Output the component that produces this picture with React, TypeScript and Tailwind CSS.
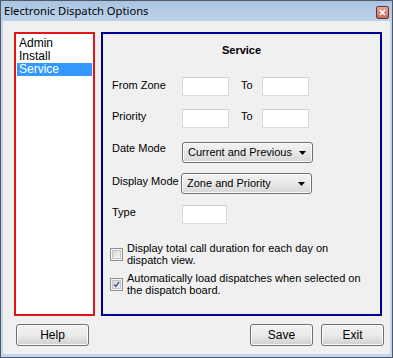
import React, { useState } from 'react';

const font = { fontFamily: '"Liberation Sans", Arial, sans-serif' };

const TextBox: React.FC<{ w: string }> = ({ w }) => (
  <div className={`${w} h-[19px] bg-white border border-[#d9d9d9] border-t-[#cfcfcf]`} />
);

const Dropdown: React.FC<{ value: string }> = ({ value }) => (
  <div className="w-[131px] h-[21px] rounded-[3px] border border-[#707070] bg-gradient-to-b from-[#f3f3f3] via-[#e8e8e8] to-[#d7d7d7] flex items-center pl-[5px] pr-[5px] shadow-[inset_0_0_0_1px_#fcfcfc]">
    <span className="flex-1 text-[11px] leading-[13px] text-black">{value}</span>
    <svg width="7" height="4" viewBox="0 0 7 4" className="mr-[1px]">
      <path d="M0 0h7L3.5 4z" fill="#000" />
    </svg>
  </div>
);

const Check: React.FC<{ checked: boolean; onClick: () => void }> = ({ checked, onClick }) => (
  <div
    onClick={onClick}
    className="w-[13px] h-[13px] shrink-0 border border-[#8e8f8f] bg-[#f4f4f4] flex items-center justify-center"
  >
    <div className="w-[9px] h-[9px] border border-[#c4c4c4] bg-gradient-to-br from-[#d8d8d8] to-[#f6f6f6] flex items-center justify-center">
      {checked && (
        <svg width="9" height="9" viewBox="0 0 9 9">
          <path d="M1.5 4.5 L3.5 7 L7.8 1.3" fill="none" stroke="#3c5a9a" strokeWidth="1.8" />
        </svg>
      )}
    </div>
  </div>
);

const Btn: React.FC<{ label: string; w: string }> = ({ label, w }) => (
  <button className={`${w} h-[22px] rounded-[3px] border border-[#707070] bg-gradient-to-b from-[#f2f2f2] via-[#ebebeb] to-[#cfcfcf] text-[12px] text-black shadow-[inset_0_0_0_1px_#fbfbfb]`}>
    {label}
  </button>
);

const App: React.FC = () => {
  const [selected, setSelected] = useState('Service');
  const [showTotal, setShowTotal] = useState(false);
  const [autoLoad, setAutoLoad] = useState(true);

  return (
    <div style={font} className="w-[393px] h-[358px] border border-[#4e5866] bg-[#c4d6ec] flex flex-col">
      {/* title bar */}
      <div className="h-[20px] bg-gradient-to-b from-[#aac4e1] to-[#bed3ea] flex items-center pl-[3px] pr-[3px]">
        <span style={{ fontFamily: '"Noto Sans", sans-serif' }} className="flex-1 text-[11.2px] leading-[14px] text-black">
          Electronic Dispatch Options
        </span>
        <div className="w-[13px] h-[13px] mt-[2px] rounded-[2px] border border-[#5b3a36] bg-gradient-to-b from-[#e6a79d] to-[#c86a5e] flex items-center justify-center">
          <svg width="7" height="7" viewBox="0 0 7 7">
            <path d="M1 1L6 6M6 1L1 6" stroke="#fff" strokeWidth="1.6" />
          </svg>
        </div>
      </div>

      {/* client area */}
      <div className="flex-1 mx-[2px] mb-[3px] bg-[#f0f0f0] flex flex-col pl-[11px] pr-[6px] pt-[11px]">
        <div className="flex gap-[6px]">
          {/* list */}
          <div className="w-[81px] h-[284px] border-2 border-[#e0161b] bg-white pt-[3px] pl-[1px] pr-[1px] text-[12px] leading-[13px]">
            {['Admin', 'Install', 'Service'].map((it) => (
              <div
                key={it}
                onClick={() => setSelected(it)}
                className={`pl-[2px] h-[13px] ${selected === it ? 'bg-[#3399ff] text-white' : 'text-black'}`}
              >
                {it}
              </div>
            ))}
          </div>

          {/* service panel */}
          <div className="w-[281px] h-[284px] border-2 border-[#000093] flex flex-col text-[11px] leading-[13px] text-black">
            <div className="mt-[10px] text-center font-bold">Service</div>

            <div className="mt-[20px] flex pl-[9px] h-[19px]">
              <span className="w-[70px] pt-[2px]">From Zone</span>
              <TextBox w="w-[47px]" />
              <span className="ml-[12px] w-[21px] pt-[2px]">To</span>
              <TextBox w="w-[47px]" />
            </div>

            <div className="mt-[13px] flex pl-[9px] h-[19px]">
              <span className="w-[70px] pt-[1px]">Priority</span>
              <TextBox w="w-[47px]" />
              <span className="ml-[12px] w-[21px] pt-[1px]">To</span>
              <TextBox w="w-[47px]" />
            </div>

            <div className="mt-[14px] flex pl-[9px]">
              <span className="w-[70px] pt-[0px]">Date Mode</span>
              <Dropdown value="Current and Previous" />
            </div>

            <div className="mt-[10px] flex pl-[9px]">
              <span className="w-[69px] pt-[2px] whitespace-nowrap">Display Mode</span>
              <Dropdown value="Zone and Priority" />
            </div>

            <div className="mt-[11px] flex pl-[9px] h-[19px]">
              <span className="w-[70px] pt-[1px]">Type</span>
              <TextBox w="w-[45px]" />
            </div>

            <div className="mt-[18px] flex items-center pl-[7px] gap-[4px] leading-[12px]">
              <Check checked={showTotal} onClick={() => setShowTotal(!showTotal)} />
              <span>
                Display total call duration for each day on
                <br />
                dispatch view.
              </span>
            </div>

            <div className="mt-[6px] flex items-center pl-[7px] gap-[4px] leading-[12px]">
              <Check checked={autoLoad} onClick={() => setAutoLoad(!autoLoad)} />
              <span>
                Automatically load dispatches when selected on
                <br />
                the dispatch board.
              </span>
            </div>
          </div>
        </div>

        {/* buttons */}
        <div className="mt-[8px] flex items-center pl-[2px]">
          <Btn label="Help" w="w-[73px]" />
          <div className="flex-1" />
          <div className="flex gap-[8px]">
            <Btn label="Save" w="w-[63px]" />
            <Btn label="Exit" w="w-[63px]" />
          </div>
        </div>
      </div>
    </div>
  );
};

export default App;
